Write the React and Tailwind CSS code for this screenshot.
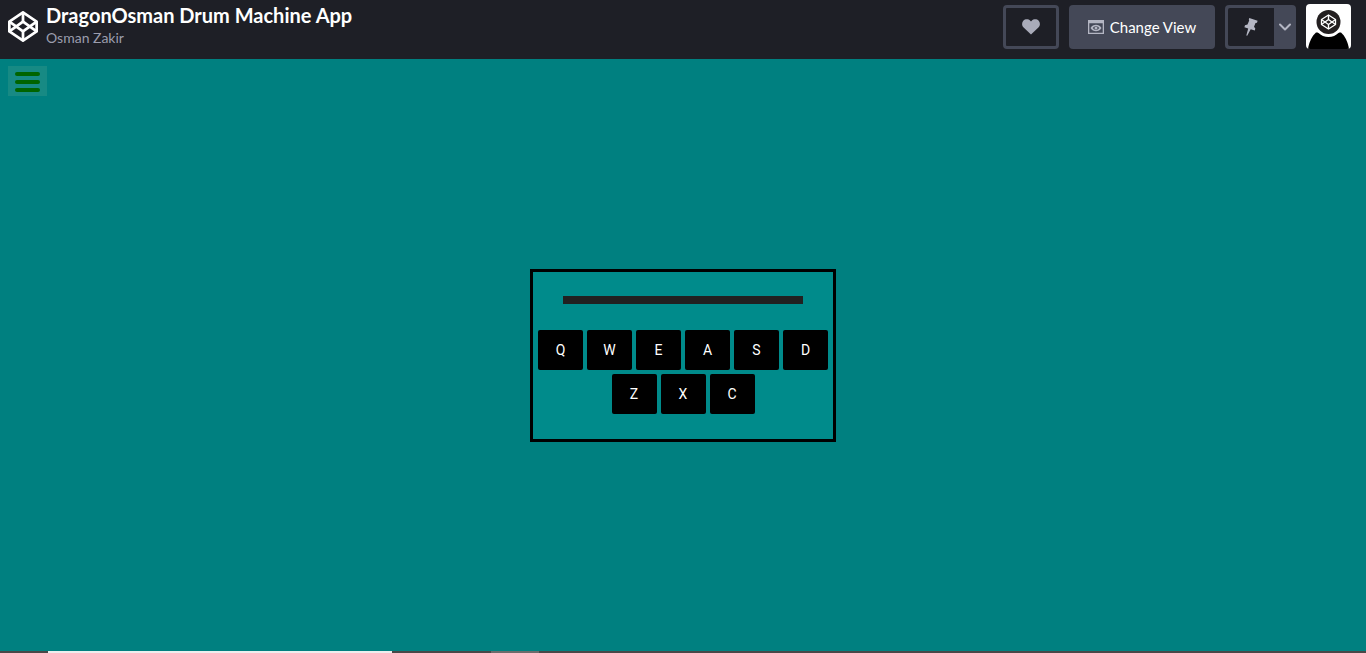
import React from "react";

const KEYS = ["Q", "W", "E", "A", "S", "D", "Z", "X", "C"];

function LogoLines() {
  return (
    <>
      <polygon points="12 2 22 8.5 22 15.5 12 22 2 15.5 2 8.5" />
      <line x1="12" y1="22" x2="12" y2="15.5" />
      <polyline points="22 8.5 12 15.5 2 8.5" />
      <polyline points="2 15.5 12 8.5 22 15.5" />
      <line x1="12" y1="2" x2="12" y2="8.5" />
    </>
  );
}

function Header() {
  return (
    <header className="flex h-[59px] items-start justify-between bg-[#1e1f26] pr-[15px] pl-2">
      <div className="flex items-start gap-2">
        <a href="#home" aria-label="Home" className="mt-[11px] block">
          <svg className="h-[31px] w-[30px]" viewBox="1 1 22 22" preserveAspectRatio="none" fill="none" stroke="#fff" strokeWidth="2" strokeLinejoin="round">
            <LogoLines />
          </svg>
        </a>
        <div className="pt-[3px]">
          <h1 className="text-[20px] leading-6 font-bold text-white">DragonOsman Drum Machine App</h1>
          <a href="#author" className="block text-[14px] leading-[22px] text-[#9b9dad]">Osman Zakir</a>
        </div>
      </div>

      <div className="flex items-start gap-2.5 pt-[5px]">
        <button type="button" aria-label="Love" className="flex h-11 w-14 items-center justify-center rounded-[4px] border-3 border-[#444857]">
          <svg className="h-4 w-[18px]" viewBox="0 0 18 16" fill="#a9abb9">
            <path d="M9 15.6 1.6 8.6C-.3 6.700-.4 3.600 1.300 1.800 3.200-.2 6.500-.1 8.300 1.800L9 2.600l.7-.8c1.800-1.900 5.100-2 7 0 1.700 1.800 1.600 4.900-.3 6.800z" />
          </svg>
        </button>
        <button type="button" className="flex h-11 w-[146px] items-center justify-center gap-[6px] rounded-[4px] bg-[#444857] text-[15px] leading-5 text-white">
          <svg className="h-[14px] w-4" viewBox="0 0 16 14" fill="#b4b6c3" fillRule="evenodd">
            <path d="M0 0h16v14H0zM1.300 3.200v9.500h13.400V3.200z" />
            <path d="M2.500 8c2.600-4.400 8.400-4.400 11 0-2.600 4.400-8.400 4.400-11 0zm2.300 0c1.700 2.500 4.700 2.500 6.400 0-1.700-2.500-4.700-2.500-6.400 0z" />
            <circle cx="8" cy="8" r="1.500" />
          </svg>
          Change View
        </button>
        <div className="flex h-11 w-[71px] rounded-[4px] bg-[#444857] py-[3px] pl-[3px]">
          <button type="button" aria-label="Pin" className="flex w-[46px] items-center justify-center rounded-l-[2px] bg-[#1e1f26]">
            <svg className="h-5 w-4" viewBox="0 0 16 20" fill="#b4b6c3">
              <path d="M6.300 1 14.600 3.700 14 5.700 12.500 5.900 11 9.800 12.300 11.600 11.800 13.500 7.700 12.300 4.200 18.800 3.300 18.600 5.200 11.500 1.400 10.200 2 8.300 4.500 7.600 6.200 3.500 5.800 2.500z" />
            </svg>
          </button>
          <button type="button" aria-label="More pin options" className="flex flex-1 items-center justify-center">
            <svg className="h-2 w-3" viewBox="0 0 12 8" fill="none" stroke="#b4b6c3" strokeWidth="2" strokeLinecap="round" strokeLinejoin="round">
              <path d="M1 1.500l5 5 5-5" />
            </svg>
          </button>
        </div>
        <button type="button" aria-label="Account" className="-mt-px block size-[45px] overflow-hidden rounded-[4px] bg-white">
          <svg className="size-[45px]" viewBox="0 0 45 45">
            <path d="M2 45C3 38 6 32 10 28.500h25C39 32 42 38 43 45z" fill="#000" />
            <circle cx="22.500" cy="18.500" r="14.500" fill="#fff" />
            <circle cx="22.500" cy="18" r="12" fill="#231f20" />
            <g transform="translate(14.100 9.600) scale(.7)" fill="none" stroke="#fff" strokeWidth="1.900" strokeLinejoin="round">
              <LogoLines />
            </g>
          </svg>
        </button>
      </div>
    </header>
  );
}

function DrumMachine() {
  return (
    <section aria-label="Drum machine" className="w-[306px] border-3 border-black bg-[#008b8b] pt-6 pb-[25px]">
      <div role="status" className="mx-[30px] h-2 bg-[#212121]" />
      <div className="mt-[26px] flex flex-wrap justify-center gap-1 font-[Roboto,sans-serif]">
        {KEYS.map((key) => (
          <button key={key} type="button" className="h-10 w-[45px] rounded-[2px] bg-black text-[14px] leading-5 text-white">
            {key}
          </button>
        ))}
      </div>
    </section>
  );
}

export default function App() {
  return (
    <div className="flex min-h-screen flex-col bg-[#008080] font-[Lato,sans-serif]">
      <Header />
      <main className="relative flex flex-1 items-center justify-center">
        <button type="button" aria-label="Menu" className="absolute top-[7px] left-2 flex h-[30px] w-[39px] flex-col items-center justify-center gap-1 bg-[#178a84] pt-0.5">
          <span className="h-1 w-[25px] rounded-full bg-[#006400]" />
          <span className="h-1 w-[25px] rounded-full bg-[#006400]" />
          <span className="h-1 w-[25px] rounded-full bg-[#006400]" />
        </button>
        <DrumMachine />
      </main>
      <footer className="flex h-0.5 bg-[#484848]">
        <div className="ml-12 w-[344px] bg-[#eeeeee]" />
        <div className="ml-[99px] w-12 bg-[#6c6c6c]" />
      </footer>
    </div>
  );
}
